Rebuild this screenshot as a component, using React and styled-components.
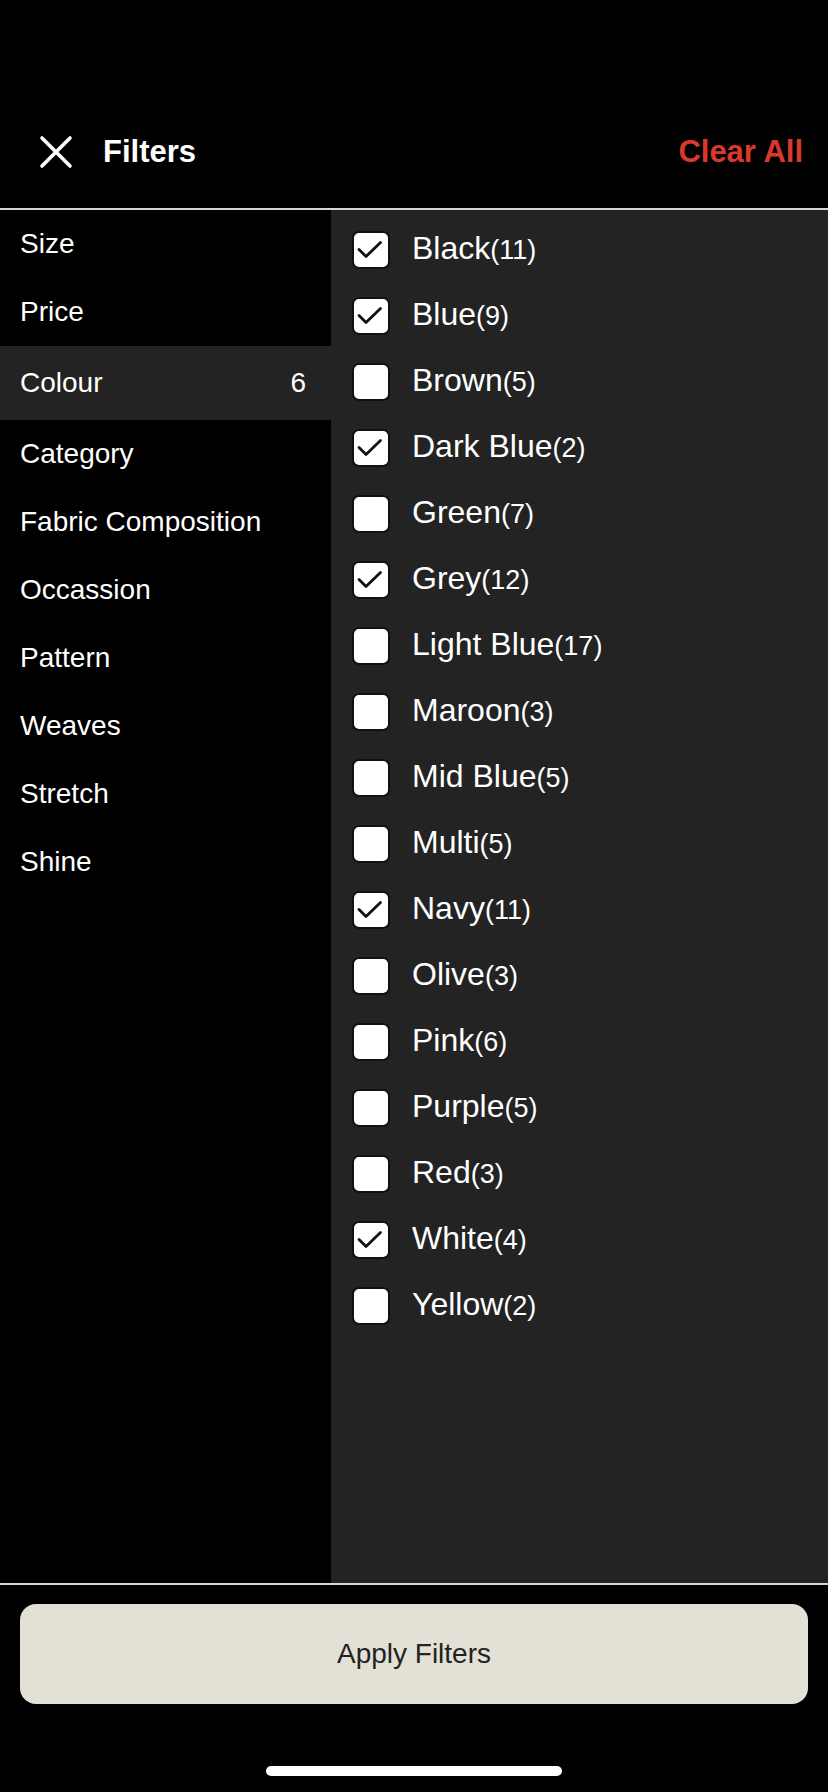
import React, { useState } from "react";
import styled, { createGlobalStyle } from "styled-components";

const GlobalStyle = createGlobalStyle`
  html, body {
    margin: 0;
    padding: 0;
    background: #000;
  }
  * {
    box-sizing: border-box;
  }
`;

const Screen = styled.div`
  width: 828px;
  height: 1792px;
  display: flex;
  flex-direction: column;
  background: #000;
  color: #fff;
  font-family: "Liberation Sans", Arial, sans-serif;
  overflow: hidden;
`;

const StatusBar = styled.div`
  height: 96px;
  flex-shrink: 0;
`;

const Header = styled.header`
  height: 114px;
  flex-shrink: 0;
  display: flex;
  align-items: center;
  padding: 0 25px 0 38px;
  border-bottom: 2px solid #d6d6d6;
`;

const CloseButton = styled.button`
  width: 36px;
  height: 36px;
  padding: 0;
  border: none;
  background: transparent;
  cursor: pointer;
  display: flex;
  align-items: center;
  justify-content: center;
`;

const Title = styled.h1`
  margin: 0 0 0 29px;
  font-size: 31px;
  font-weight: 700;
  flex: 1;
`;

const ClearAll = styled.button`
  border: none;
  background: transparent;
  padding: 0;
  color: #d9392c;
  font-family: inherit;
  font-size: 31px;
  font-weight: 700;
  cursor: pointer;
`;

const Body = styled.div`
  flex: 1;
  display: flex;
  min-height: 0;
`;

const Sidebar = styled.nav`
  width: 331px;
  flex-shrink: 0;
  display: flex;
  flex-direction: column;
`;

const NavItem = styled.div`
  height: ${(p) => (p.$active ? "74px" : "68px")};
  display: flex;
  align-items: center;
  justify-content: space-between;
  padding: 0 25px 0 20px;
  font-size: 28px;
  background: ${(p) => (p.$active ? "#232323" : "transparent")};
  cursor: pointer;
`;

const Panel = styled.div`
  flex: 1;
  background: #232323;
  padding: 7px 21px;
  display: flex;
  flex-direction: column;
`;

const OptionRow = styled.label`
  height: 66px;
  display: flex;
  align-items: center;
  gap: 22px;
  cursor: pointer;
`;

const Box = styled.span`
  width: 38px;
  height: 38px;
  flex-shrink: 0;
  border-radius: 7px;
  background: #fff;
  border: 2px solid #111;
  display: flex;
  align-items: center;
  justify-content: center;
`;

const OptionLabel = styled.span`
  font-size: 32px;
  line-height: 1;
  margin-top: -5px;
`;

const Count = styled.span`
  font-size: 27px;
`;

const Footer = styled.footer`
  flex-shrink: 0;
  border-top: 2px solid #d6d6d6;
  padding: 19px 20px 16px;
  display: flex;
  flex-direction: column;
  align-items: center;
`;

const ApplyButton = styled.button`
  width: 100%;
  height: 100px;
  border: none;
  border-radius: 16px;
  background: #e3e1d6;
  color: #222;
  font-family: inherit;
  font-size: 28px;
  cursor: pointer;
`;

const HomeIndicator = styled.div`
  margin-top: 62px;
  width: 296px;
  height: 10px;
  border-radius: 5px;
  background: #fff;
`;

const categories = [
  "Size",
  "Price",
  "Colour",
  "Category",
  "Fabric Composition",
  "Occassion",
  "Pattern",
  "Weaves",
  "Stretch",
  "Shine",
];

const colours = [
  ["Black", 11, true],
  ["Blue", 9, true],
  ["Brown", 5, false],
  ["Dark Blue", 2, true],
  ["Green", 7, false],
  ["Grey", 12, true],
  ["Light Blue", 17, false],
  ["Maroon", 3, false],
  ["Mid Blue", 5, false],
  ["Multi", 5, false],
  ["Navy", 11, true],
  ["Olive", 3, false],
  ["Pink", 6, false],
  ["Purple", 5, false],
  ["Red", 3, false],
  ["White", 4, true],
  ["Yellow", 2, false],
];

const CloseIcon = () => (
  <svg width="34" height="34" viewBox="0 0 34 34">
    <path d="M3 3 L31 31 M31 3 L3 31" stroke="#fff" strokeWidth="3.6" strokeLinecap="round" />
  </svg>
);

const Check = () => (
  <svg width="34" height="34" viewBox="0 0 34 34">
    <path d="M5 16.5 L12 23.5 L26.5 9.5" fill="none" stroke="#111" strokeWidth="2.8" strokeLinecap="round" strokeLinejoin="round" />
  </svg>
);

export default function App() {
  const [checked, setChecked] = useState(colours.map((c) => c[2]));
  const selected = checked.filter(Boolean).length;

  const toggle = (i) =>
    setChecked((prev) => prev.map((v, j) => (j === i ? !v : v)));

  return (
    <Screen>
      <GlobalStyle />
      <StatusBar />
      <Header>
        <CloseButton aria-label="Close">
          <CloseIcon />
        </CloseButton>
        <Title>Filters</Title>
        <ClearAll onClick={() => setChecked(colours.map(() => false))}>Clear All</ClearAll>
      </Header>
      <Body>
        <Sidebar>
          {categories.map((c) => (
            <NavItem key={c} $active={c === "Colour"}>
              <span>{c}</span>
              {c === "Colour" && selected > 0 && <span>{selected}</span>}
            </NavItem>
          ))}
        </Sidebar>
        <Panel>
          {colours.map(([name, count], i) => (
            <OptionRow key={name} onClick={() => toggle(i)}>
              <Box>{checked[i] && <Check />}</Box>
              <OptionLabel>
                {name}
                <Count>({count})</Count>
              </OptionLabel>
            </OptionRow>
          ))}
        </Panel>
      </Body>
      <Footer>
        <ApplyButton>Apply Filters</ApplyButton>
        <HomeIndicator />
      </Footer>
    </Screen>
  );
}
